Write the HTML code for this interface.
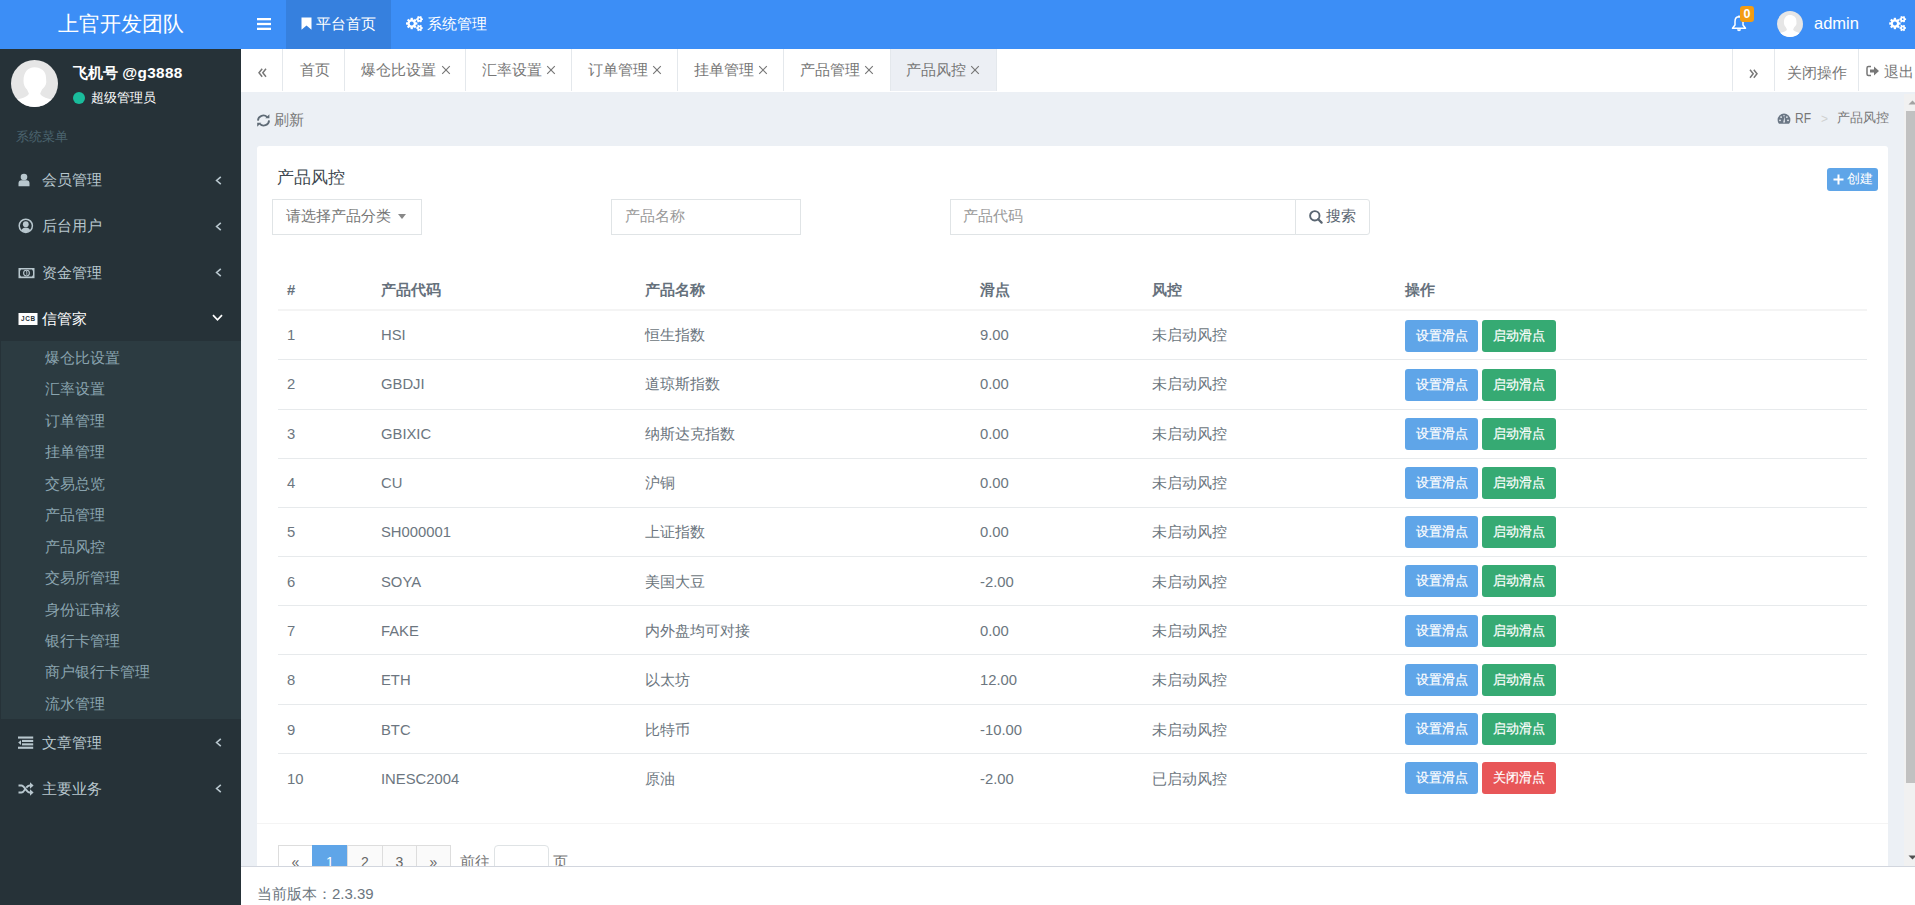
<!DOCTYPE html>
<html><head><meta charset="utf-8">
<style>
*{box-sizing:border-box;margin:0;padding:0}
html,body{width:1915px;height:905px;overflow:hidden;background:#ecf0f5;font-family:"Liberation Sans",sans-serif;font-size:14px;color:#676a6c}
.a{position:absolute;white-space:nowrap}
svg{position:absolute;display:block}
#hdr{position:absolute;left:0;top:0;width:1915px;height:49px;background:#3c8ef6}
#side{position:absolute;left:0;top:49px;width:241px;height:856px;background:#263238}
#tabs{position:absolute;left:241px;top:49px;width:1674px;height:43px;background:#fff}
#content{position:absolute;left:241px;top:92px;width:1674px;height:774px;background:#ecf0f5}
#footer{position:absolute;left:241px;top:866px;width:1674px;height:39px;background:#fff;border-top:1px solid #d2d6de}
.wt{color:#fff}
.mi{color:#b8c7ce;font-size:15px;line-height:20px}
.sm{color:#8aa4af;font-size:15px;line-height:20px}
.tab{position:absolute;top:0;height:42px;border-right:1px solid #e4e8ec}
.tt{color:#777;font-size:15px;line-height:20px;top:11px}
.th{font-weight:bold;color:#66717c;font-size:15px;line-height:20px}
.td{color:#6c7680;font-size:15px;line-height:20px}
.en{font-size:14.8px}
.btn{position:absolute;width:73px;height:31.5px;border-radius:3px;color:#fff;font-size:13px;line-height:31px;text-align:center;-webkit-text-stroke:0.2px #fff}
.b1{background:#5fa5e8}
.b2{background:#36aa73}
.b3{background:#e85658}
</style></head><body>
<div id="hdr">
<div class="a wt" style="left:58px;top:10px;font-size:21px;line-height:28px">上官开发团队</div>
<svg style="left:257px;top:18px" width="14" height="12" viewBox="0 0 14 12"><rect y="0" width="14" height="2.3" fill="#fff"/><rect y="4.85" width="14" height="2.3" fill="#fff"/><rect y="9.7" width="14" height="2.3" fill="#fff"/></svg>
<div class="a" style="left:286px;top:0;width:105px;height:49px;background:#3680de"></div>
<svg style="left:301px;top:17px" width="11" height="13" viewBox="0 0 11 13"><path d="M0.5 0.5H10.5V12.8L5.5 8.6L0.5 12.8Z" fill="#fff"/></svg>
<div class="a wt" style="left:316px;top:14px;font-size:15px;line-height:20px">平台首页</div>
<svg style="left:405px;top:15px" width="19" height="17" viewBox="0 0 19 17"><circle cx="6.7" cy="8.5" r="4.3" fill="#fff"/><rect x="5.55" y="2.80" width="2.3" height="5.7" fill="#fff" transform="rotate(0.0 6.7 8.5)"/><rect x="5.55" y="2.80" width="2.3" height="5.7" fill="#fff" transform="rotate(45.0 6.7 8.5)"/><rect x="5.55" y="2.80" width="2.3" height="5.7" fill="#fff" transform="rotate(90.0 6.7 8.5)"/><rect x="5.55" y="2.80" width="2.3" height="5.7" fill="#fff" transform="rotate(135.0 6.7 8.5)"/><rect x="5.55" y="2.80" width="2.3" height="5.7" fill="#fff" transform="rotate(180.0 6.7 8.5)"/><rect x="5.55" y="2.80" width="2.3" height="5.7" fill="#fff" transform="rotate(225.0 6.7 8.5)"/><rect x="5.55" y="2.80" width="2.3" height="5.7" fill="#fff" transform="rotate(270.0 6.7 8.5)"/><rect x="5.55" y="2.80" width="2.3" height="5.7" fill="#fff" transform="rotate(315.0 6.7 8.5)"/><circle cx="6.7" cy="8.5" r="2.0" fill="#3c8ef6"/><circle cx="14.5" cy="4.2" r="2.6" fill="#fff"/><rect x="13.75" y="0.80" width="1.5" height="3.4" fill="#fff" transform="rotate(30.0 14.5 4.2)"/><rect x="13.75" y="0.80" width="1.5" height="3.4" fill="#fff" transform="rotate(90.0 14.5 4.2)"/><rect x="13.75" y="0.80" width="1.5" height="3.4" fill="#fff" transform="rotate(150.0 14.5 4.2)"/><rect x="13.75" y="0.80" width="1.5" height="3.4" fill="#fff" transform="rotate(210.0 14.5 4.2)"/><rect x="13.75" y="0.80" width="1.5" height="3.4" fill="#fff" transform="rotate(270.0 14.5 4.2)"/><rect x="13.75" y="0.80" width="1.5" height="3.4" fill="#fff" transform="rotate(330.0 14.5 4.2)"/><circle cx="14.5" cy="4.2" r="0.85" fill="#3c8ef6"/><circle cx="14.5" cy="13.0" r="2.5" fill="#fff"/><rect x="13.75" y="9.70" width="1.5" height="3.3" fill="#fff" transform="rotate(30.0 14.5 13.0)"/><rect x="13.75" y="9.70" width="1.5" height="3.3" fill="#fff" transform="rotate(90.0 14.5 13.0)"/><rect x="13.75" y="9.70" width="1.5" height="3.3" fill="#fff" transform="rotate(150.0 14.5 13.0)"/><rect x="13.75" y="9.70" width="1.5" height="3.3" fill="#fff" transform="rotate(210.0 14.5 13.0)"/><rect x="13.75" y="9.70" width="1.5" height="3.3" fill="#fff" transform="rotate(270.0 14.5 13.0)"/><rect x="13.75" y="9.70" width="1.5" height="3.3" fill="#fff" transform="rotate(330.0 14.5 13.0)"/><circle cx="14.5" cy="13.0" r="0.85" fill="#3c8ef6"/></svg>
<div class="a wt" style="left:427px;top:14px;font-size:15px;line-height:20px">系统管理</div>
<svg style="left:1731px;top:15px" width="16" height="17" viewBox="0 0 16 17"><path d="M8 1.8C5.6 1.8 4 3.8 4 6.5V10L1.5 13.3H14.5L12 10V6.5C12 3.8 10.4 1.8 8 1.8Z" fill="none" stroke="#fff" stroke-width="1.5" stroke-linejoin="round"/><path d="M6 14.2A2 2 0 0 0 10 14.2Z" fill="#fff"/><rect x="7.2" y="0.5" width="1.6" height="2" fill="#fff"/></svg>
<div class="a" style="left:1740px;top:6px;width:14px;height:16px;background:#f39c12;border-radius:3px;color:#fff;font-size:12.5px;font-weight:bold;line-height:16px;text-align:center">0</div>
<svg style="left:1777px;top:11px" width="26" height="26" viewBox="0 0 47 47"><defs><clipPath id="av2"><circle cx="23.5" cy="23.5" r="23.5"/></clipPath></defs><circle cx="23.5" cy="23.5" r="23.5" fill="#e6e6e6"/><path d="M12.5 21C12.5 12 17 7.3 23.5 7.3C30 7.3 35 11.5 35 17.5L35.3 22C35.3 25 33 27.5 31 29.5L29.2 33.5C30 37 37 38.5 46 41L46 48L1 48L1 41C10 38.5 17 37 17.9 33.5L16 29.5C14 27.5 12.5 25 12.5 21Z" fill="#fff" clip-path="url(#av2)"/></svg>
<div class="a wt" style="left:1814px;top:13px;font-size:16.5px;line-height:20px">admin</div>
<svg style="left:1888px;top:15px" width="19" height="17" viewBox="0 0 19 17"><circle cx="6.9" cy="8.5" r="4.3" fill="#fff"/><rect x="5.75" y="2.80" width="2.3" height="5.7" fill="#fff" transform="rotate(0.0 6.9 8.5)"/><rect x="5.75" y="2.80" width="2.3" height="5.7" fill="#fff" transform="rotate(45.0 6.9 8.5)"/><rect x="5.75" y="2.80" width="2.3" height="5.7" fill="#fff" transform="rotate(90.0 6.9 8.5)"/><rect x="5.75" y="2.80" width="2.3" height="5.7" fill="#fff" transform="rotate(135.0 6.9 8.5)"/><rect x="5.75" y="2.80" width="2.3" height="5.7" fill="#fff" transform="rotate(180.0 6.9 8.5)"/><rect x="5.75" y="2.80" width="2.3" height="5.7" fill="#fff" transform="rotate(225.0 6.9 8.5)"/><rect x="5.75" y="2.80" width="2.3" height="5.7" fill="#fff" transform="rotate(270.0 6.9 8.5)"/><rect x="5.75" y="2.80" width="2.3" height="5.7" fill="#fff" transform="rotate(315.0 6.9 8.5)"/><circle cx="6.9" cy="8.5" r="2.0" fill="#3c8ef6"/><circle cx="14.7" cy="4.2" r="2.6" fill="#fff"/><rect x="13.95" y="0.80" width="1.5" height="3.4" fill="#fff" transform="rotate(30.0 14.7 4.2)"/><rect x="13.95" y="0.80" width="1.5" height="3.4" fill="#fff" transform="rotate(90.0 14.7 4.2)"/><rect x="13.95" y="0.80" width="1.5" height="3.4" fill="#fff" transform="rotate(150.0 14.7 4.2)"/><rect x="13.95" y="0.80" width="1.5" height="3.4" fill="#fff" transform="rotate(210.0 14.7 4.2)"/><rect x="13.95" y="0.80" width="1.5" height="3.4" fill="#fff" transform="rotate(270.0 14.7 4.2)"/><rect x="13.95" y="0.80" width="1.5" height="3.4" fill="#fff" transform="rotate(330.0 14.7 4.2)"/><circle cx="14.7" cy="4.2" r="0.85" fill="#3c8ef6"/><circle cx="14.7" cy="13.0" r="2.5" fill="#fff"/><rect x="13.95" y="9.70" width="1.5" height="3.3" fill="#fff" transform="rotate(30.0 14.7 13.0)"/><rect x="13.95" y="9.70" width="1.5" height="3.3" fill="#fff" transform="rotate(90.0 14.7 13.0)"/><rect x="13.95" y="9.70" width="1.5" height="3.3" fill="#fff" transform="rotate(150.0 14.7 13.0)"/><rect x="13.95" y="9.70" width="1.5" height="3.3" fill="#fff" transform="rotate(210.0 14.7 13.0)"/><rect x="13.95" y="9.70" width="1.5" height="3.3" fill="#fff" transform="rotate(270.0 14.7 13.0)"/><rect x="13.95" y="9.70" width="1.5" height="3.3" fill="#fff" transform="rotate(330.0 14.7 13.0)"/><circle cx="14.7" cy="13.0" r="0.85" fill="#3c8ef6"/></svg>
</div>
<div id="side"></div>
<svg style="left:11px;top:60px" width="47" height="47" viewBox="0 0 47 47"><defs><clipPath id="av1"><circle cx="23.5" cy="23.5" r="23.5"/></clipPath></defs><circle cx="23.5" cy="23.5" r="23.5" fill="#e6e6e6"/><path d="M12.5 21C12.5 12 17 7.3 23.5 7.3C30 7.3 35 11.5 35 17.5L35.3 22C35.3 25 33 27.5 31 29.5L29.2 33.5C30 37 37 38.5 46 41L46 48L1 48L1 41C10 38.5 17 37 17.9 33.5L16 29.5C14 27.5 12.5 25 12.5 21Z" fill="#fff" clip-path="url(#av1)"/></svg>
<div class="a wt" style="left:73px;top:63px;font-size:15.3px;line-height:20px;font-weight:bold">飞机号 <span style="letter-spacing:0.35px">@g3888</span></div>
<div class="a" style="left:73px;top:92px;width:12px;height:12px;border-radius:50%;background:#1abc9c"></div>
<div class="a wt" style="left:91px;top:88px;font-size:13px;line-height:20px">超级管理员</div>
<div class="a" style="left:16px;top:129px;font-size:13px;line-height:16px;color:#4b646f">系统菜单</div>
<div class="a mi" style="left:42px;top:170px">会员管理</div>
<svg style="left:215px;top:176px" width="7" height="9" viewBox="0 0 7 9"><path d="M5.8 0.8L1.6 4.5L5.8 8.2" fill="none" stroke="#b8c7ce" stroke-width="1.6"/></svg>
<div class="a mi" style="left:42px;top:216px">后台用户</div>
<svg style="left:215px;top:222px" width="7" height="9" viewBox="0 0 7 9"><path d="M5.8 0.8L1.6 4.5L5.8 8.2" fill="none" stroke="#b8c7ce" stroke-width="1.6"/></svg>
<div class="a mi" style="left:42px;top:263px">资金管理</div>
<svg style="left:215px;top:268px" width="7" height="9" viewBox="0 0 7 9"><path d="M5.8 0.8L1.6 4.5L5.8 8.2" fill="none" stroke="#b8c7ce" stroke-width="1.6"/></svg>
<div class="a mi" style="left:42px;top:733px">文章管理</div>
<svg style="left:215px;top:738px" width="7" height="9" viewBox="0 0 7 9"><path d="M5.8 0.8L1.6 4.5L5.8 8.2" fill="none" stroke="#b8c7ce" stroke-width="1.6"/></svg>
<div class="a mi" style="left:42px;top:779px">主要业务</div>
<svg style="left:215px;top:784px" width="7" height="9" viewBox="0 0 7 9"><path d="M5.8 0.8L1.6 4.5L5.8 8.2" fill="none" stroke="#b8c7ce" stroke-width="1.6"/></svg>
<svg style="left:18px;top:173px" width="12" height="14" viewBox="0 0 12 14"><circle cx="6" cy="4" r="3.3" fill="#b8c7ce"/><path d="M0.5 13.3V10.5Q0.5 7.2 3.5 7.2H8.5Q11.5 7.2 11.5 10.5V13.3Z" fill="#b8c7ce"/></svg>
<svg style="left:18px;top:218px" width="16" height="16" viewBox="0 0 16 16"><circle cx="7.8" cy="7.8" r="6.6" fill="none" stroke="#b8c7ce" stroke-width="1.5"/><circle cx="7.8" cy="6.2" r="2.9" fill="#b8c7ce"/><path d="M3.3 12.5Q4.5 9.4 7.8 9.4Q11.1 9.4 12.3 12.5Q10.5 14.3 7.8 14.3Q5.1 14.3 3.3 12.5Z" fill="#b8c7ce"/></svg>
<svg style="left:18px;top:267px" width="17" height="12" viewBox="0 0 17 12"><rect x="0.5" y="1" width="16" height="10.2" fill="#b8c7ce"/><path d="M3 2.6H14L15 4.3V7.9L14 9.6H3L2 7.9V4.3Z" fill="#263238"/><circle cx="8.5" cy="6.1" r="2.9" fill="none" stroke="#b8c7ce" stroke-width="1.1"/><path d="M8 4.7L8.8 4.3V7.8" stroke="#b8c7ce" stroke-width="0.9" fill="none"/></svg>
<svg style="left:18px;top:312px" width="20" height="14" viewBox="0 0 20 14"><rect x="0.5" y="1" width="19" height="12" fill="#fff"/><text x="10" y="9.1" font-family="Liberation Sans" font-weight="bold" font-size="6.4" text-anchor="middle" fill="#263238" textLength="14">JCB</text></svg>
<div class="a wt" style="left:42px;top:309px;font-size:15px;line-height:20px">信管家</div>
<svg style="left:212px;top:314px" width="11" height="8" viewBox="0 0 11 8"><path d="M1 1.2L5.5 5.8L10 1.2" fill="none" stroke="#fff" stroke-width="1.7"/></svg>
<svg style="left:18px;top:736px" width="16" height="13" viewBox="0 0 16 13"><rect x="0" y="0.5" width="15.2" height="2.1" fill="#b8c7ce"/><rect x="4" y="3.9" width="11.2" height="2.1" fill="#b8c7ce"/><rect x="4" y="7.3" width="11.2" height="2.1" fill="#b8c7ce"/><rect x="0" y="10.7" width="15.2" height="2.1" fill="#b8c7ce"/><path d="M0.2 6.6L3 4.3V8.9Z" fill="#b8c7ce"/></svg>
<svg style="left:18px;top:782px" width="16" height="14" viewBox="0 0 16 14"><path d="M0.5 3.5H3.5C6.5 3.5 8.5 10.5 11.5 10.5H13M0.5 10.5H3.5C5 10.5 6 9 7 7.5M8.3 5.6C9.2 4.4 10 3.5 11.5 3.5H13" fill="none" stroke="#b8c7ce" stroke-width="2"/><path d="M12 0.3L15.6 3.5L12 6.7Z M12 7.3L15.6 10.5L12 13.7Z" fill="#b8c7ce"/></svg>
<div class="a" style="left:0;top:341px;width:241px;height:378px;background:#2c3b41;border-left:1px solid #263238"></div>
<div class="a sm" style="left:45px;top:348px">爆仓比设置</div>
<div class="a sm" style="left:45px;top:379px">汇率设置</div>
<div class="a sm" style="left:45px;top:411px">订单管理</div>
<div class="a sm" style="left:45px;top:442px">挂单管理</div>
<div class="a sm" style="left:45px;top:474px">交易总览</div>
<div class="a sm" style="left:45px;top:505px">产品管理</div>
<div class="a sm" style="left:45px;top:537px">产品风控</div>
<div class="a sm" style="left:45px;top:568px">交易所管理</div>
<div class="a sm" style="left:45px;top:600px">身份证审核</div>
<div class="a sm" style="left:45px;top:631px">银行卡管理</div>
<div class="a sm" style="left:45px;top:662px">商户银行卡管理</div>
<div class="a sm" style="left:45px;top:694px">流水管理</div>
<div id="tabs">
<div class="tab" style="left:0;width:42px"><svg style="left:17px;top:19px" width="10" height="10" viewBox="0 0 10 10"><path d="M4.2 0.8L1 4.8L4.2 8.8M8 0.8L4.8 4.8L8 8.8" fill="none" stroke="#777" stroke-width="1.5"/></svg></div>
<div class="tab" style="left:42px;width:62px"><div class="a tt" style="left:17px">首页</div></div>
<div class="tab" style="left:104px;width:121px"><div class="a tt" style="left:16px">爆仓比设置</div><svg style="left:96px;top:16px" width="10" height="10" viewBox="0 0 10 10"><path d="M1.2 1.2L8.8 8.8M8.8 1.2L1.2 8.8" stroke="#777" stroke-width="1.15"/></svg></div>
<div class="tab" style="left:225px;width:106px"><div class="a tt" style="left:16px">汇率设置</div><svg style="left:80px;top:16px" width="10" height="10" viewBox="0 0 10 10"><path d="M1.2 1.2L8.8 8.8M8.8 1.2L1.2 8.8" stroke="#777" stroke-width="1.15"/></svg></div>
<div class="tab" style="left:331px;width:106px"><div class="a tt" style="left:16px">订单管理</div><svg style="left:80px;top:16px" width="10" height="10" viewBox="0 0 10 10"><path d="M1.2 1.2L8.8 8.8M8.8 1.2L1.2 8.8" stroke="#777" stroke-width="1.15"/></svg></div>
<div class="tab" style="left:437px;width:106px"><div class="a tt" style="left:16px">挂单管理</div><svg style="left:80px;top:16px" width="10" height="10" viewBox="0 0 10 10"><path d="M1.2 1.2L8.8 8.8M8.8 1.2L1.2 8.8" stroke="#777" stroke-width="1.15"/></svg></div>
<div class="tab" style="left:543px;width:107px"><div class="a tt" style="left:16px">产品管理</div><svg style="left:80px;top:16px" width="10" height="10" viewBox="0 0 10 10"><path d="M1.2 1.2L8.8 8.8M8.8 1.2L1.2 8.8" stroke="#777" stroke-width="1.15"/></svg></div>
<div class="tab" style="left:650px;width:106px;background:#eceff4"><div class="a tt" style="left:15px">产品风控</div><svg style="left:79px;top:16px" width="10" height="10" viewBox="0 0 10 10"><path d="M1.2 1.2L8.8 8.8M8.8 1.2L1.2 8.8" stroke="#777" stroke-width="1.15"/></svg></div>
<div class="tab" style="left:1491px;width:43px;border-left:1px solid #e4e8ec"><svg style="left:16px;top:20px" width="10" height="10" viewBox="0 0 10 10"><path d="M1 0.8L4.2 4.8L1 8.8M4.8 0.8L8 4.8L4.8 8.8" fill="none" stroke="#777" stroke-width="1.5"/></svg></div>
<div class="tab" style="left:1533px;width:85px"><div class="a tt" style="left:13px;top:14px">关闭操作</div></div>
<div class="tab" style="left:1618px;width:56px;border-right:0"><svg style="left:7px;top:16px" width="14" height="12" viewBox="0 0 14 12"><path d="M5 1.5H2.5Q1 1.5 1 3V9Q1 10.5 2.5 10.5H5" fill="none" stroke="#777" stroke-width="1.5"/><path d="M4 4.5H8V1.5L13 6L8 10.5V7.5H4Z" fill="#777"/></svg><div class="a tt" style="left:25px;top:13px">退出</div></div>
</div>
<div id="content"></div>
<svg style="left:256px;top:113px" width="15" height="15" viewBox="0 0 15 15"><path d="M1.9 7.6A5.4 5.4 0 0 1 11.2 4.2M13.1 7.4A5.4 5.4 0 0 1 3.8 10.8" fill="none" stroke="#5f6b76" stroke-width="1.8"/><path d="M13.4 1.2V5.3H9.3Z M1.2 13.8V9.7H5.3Z" fill="#5f6b76"/></svg>
<div class="a" style="left:274px;top:110px;font-size:15px;line-height:20px;color:#777">刷新</div>
<svg style="left:1777px;top:113px" width="14" height="12" viewBox="0 0 14 12"><defs><clipPath id="gc"><rect x="0" y="0" width="14" height="10.8"/></clipPath></defs><circle cx="7" cy="7" r="6.4" fill="#6b7785" clip-path="url(#gc)"/><g fill="#ecf0f5"><circle cx="3" cy="7.3" r="0.9"/><circle cx="4.1" cy="4.1" r="0.9"/><circle cx="9.9" cy="4.1" r="0.9"/><circle cx="11" cy="7.3" r="0.9"/><circle cx="7" cy="2.7" r="0.7"/></g><path d="M7.6 3.5L7.9 9.5L6.2 9.5Z" fill="#ecf0f5"/></svg>
<div class="a" style="left:1795px;top:108px;font-size:14px;line-height:20px;color:#777;transform:scaleX(0.86);transform-origin:0 0">RF</div>
<div class="a" style="left:1821px;top:109px;font-size:12px;line-height:20px;color:#d0d0d0">&gt;</div>
<div class="a" style="left:1837px;top:108px;font-size:13px;line-height:20px;color:#777">产品风控</div>
<div class="a" style="left:257px;top:146px;width:1631px;height:760px;background:#fff;border-radius:3px"></div>
<div class="a" style="left:277px;top:167px;font-size:17px;line-height:22px;color:#3d4750">产品风控</div>
<div class="a" style="left:1827px;top:168px;width:51px;height:23px;background:#5fa5e8;border-radius:3px"></div>
<svg style="left:1833px;top:174px" width="11" height="11" viewBox="0 0 11 11"><path d="M5.5 0.5V10.5M0.5 5.5H10.5" stroke="#fff" stroke-width="2"/></svg>
<div class="a wt" style="left:1847px;top:169px;font-size:13px;line-height:20px">创建</div>
<div class="a" style="left:272px;top:199px;width:150px;height:36px;border:1px solid #e0e4e6;background:#fff"></div>
<div class="a" style="left:286px;top:206px;font-size:15px;line-height:20px;color:#777">请选择产品分类</div>
<svg style="left:398px;top:214px" width="8" height="5" viewBox="0 0 8 5"><path d="M0 0H8L4 5Z" fill="#888"/></svg>
<div class="a" style="left:611px;top:199px;width:190px;height:36px;border:1px solid #e0e4e6;background:#fff"></div>
<div class="a" style="left:625px;top:206px;font-size:15px;line-height:20px;color:#999">产品名称</div>
<div class="a" style="left:950px;top:199px;width:346px;height:36px;border:1px solid #e0e4e6;background:#fff"></div>
<div class="a" style="left:963px;top:206px;font-size:15px;line-height:20px;color:#999">产品代码</div>
<div class="a" style="left:1295px;top:199px;width:75px;height:36px;border:1px solid #e0e4e6;border-radius:0 3px 3px 0;background:#fff"></div>
<svg style="left:1309px;top:210px" width="14" height="14" viewBox="0 0 14 14"><circle cx="5.8" cy="5.8" r="4.7" fill="none" stroke="#5a6672" stroke-width="1.9"/><path d="M9.2 9.2L12.6 12.6" stroke="#5a6672" stroke-width="2.2" stroke-linecap="round"/></svg>
<div class="a" style="left:1326px;top:206px;font-size:15px;line-height:20px;color:#5a6672">搜索</div>
<div class="a th en" style="left:287px;top:280px">#</div>
<div class="a th" style="left:381px;top:280px">产品代码</div>
<div class="a th" style="left:645px;top:280px">产品名称</div>
<div class="a th" style="left:980px;top:280px">滑点</div>
<div class="a th" style="left:1152px;top:280px">风控</div>
<div class="a th" style="left:1405px;top:280px">操作</div>
<div class="a" style="left:278px;top:309px;width:1589px;height:2px;background:#f4f4f4"></div>
<div class="a td en" style="left:287px;top:325px">1</div>
<div class="a td en" style="left:381px;top:325px">HSI</div>
<div class="a td" style="left:645px;top:325px">恒生指数</div>
<div class="a td en" style="left:980px;top:325px">9.00</div>
<div class="a td" style="left:1152px;top:325px">未启动风控</div>
<div class="btn b1" style="left:1405px;top:320px">设置滑点</div>
<div class="btn b2" style="left:1482px;top:320px;width:74px">启动滑点</div>
<div class="a" style="left:278px;top:359px;width:1589px;height:1px;background:#e7eaec"></div>
<div class="a td en" style="left:287px;top:374px">2</div>
<div class="a td en" style="left:381px;top:374px">GBDJI</div>
<div class="a td" style="left:645px;top:374px">道琼斯指数</div>
<div class="a td en" style="left:980px;top:374px">0.00</div>
<div class="a td" style="left:1152px;top:374px">未启动风控</div>
<div class="btn b1" style="left:1405px;top:369px">设置滑点</div>
<div class="btn b2" style="left:1482px;top:369px;width:74px">启动滑点</div>
<div class="a" style="left:278px;top:409px;width:1589px;height:1px;background:#e7eaec"></div>
<div class="a td en" style="left:287px;top:424px">3</div>
<div class="a td en" style="left:381px;top:424px">GBIXIC</div>
<div class="a td" style="left:645px;top:424px">纳斯达克指数</div>
<div class="a td en" style="left:980px;top:424px">0.00</div>
<div class="a td" style="left:1152px;top:424px">未启动风控</div>
<div class="btn b1" style="left:1405px;top:418px">设置滑点</div>
<div class="btn b2" style="left:1482px;top:418px;width:74px">启动滑点</div>
<div class="a" style="left:278px;top:458px;width:1589px;height:1px;background:#e7eaec"></div>
<div class="a td en" style="left:287px;top:473px">4</div>
<div class="a td en" style="left:381px;top:473px">CU</div>
<div class="a td" style="left:645px;top:473px">沪铜</div>
<div class="a td en" style="left:980px;top:473px">0.00</div>
<div class="a td" style="left:1152px;top:473px">未启动风控</div>
<div class="btn b1" style="left:1405px;top:467px">设置滑点</div>
<div class="btn b2" style="left:1482px;top:467px;width:74px">启动滑点</div>
<div class="a" style="left:278px;top:507px;width:1589px;height:1px;background:#e7eaec"></div>
<div class="a td en" style="left:287px;top:522px">5</div>
<div class="a td en" style="left:381px;top:522px">SH000001</div>
<div class="a td" style="left:645px;top:522px">上证指数</div>
<div class="a td en" style="left:980px;top:522px">0.00</div>
<div class="a td" style="left:1152px;top:522px">未启动风控</div>
<div class="btn b1" style="left:1405px;top:516px">设置滑点</div>
<div class="btn b2" style="left:1482px;top:516px;width:74px">启动滑点</div>
<div class="a" style="left:278px;top:556px;width:1589px;height:1px;background:#e7eaec"></div>
<div class="a td en" style="left:287px;top:572px">6</div>
<div class="a td en" style="left:381px;top:572px">SOYA</div>
<div class="a td" style="left:645px;top:572px">美国大豆</div>
<div class="a td en" style="left:980px;top:572px">-2.00</div>
<div class="a td" style="left:1152px;top:572px">未启动风控</div>
<div class="btn b1" style="left:1405px;top:565px">设置滑点</div>
<div class="btn b2" style="left:1482px;top:565px;width:74px">启动滑点</div>
<div class="a" style="left:278px;top:605px;width:1589px;height:1px;background:#e7eaec"></div>
<div class="a td en" style="left:287px;top:621px">7</div>
<div class="a td en" style="left:381px;top:621px">FAKE</div>
<div class="a td" style="left:645px;top:621px">内外盘均可对接</div>
<div class="a td en" style="left:980px;top:621px">0.00</div>
<div class="a td" style="left:1152px;top:621px">未启动风控</div>
<div class="btn b1" style="left:1405px;top:615px">设置滑点</div>
<div class="btn b2" style="left:1482px;top:615px;width:74px">启动滑点</div>
<div class="a" style="left:278px;top:654px;width:1589px;height:1px;background:#e7eaec"></div>
<div class="a td en" style="left:287px;top:670px">8</div>
<div class="a td en" style="left:381px;top:670px">ETH</div>
<div class="a td" style="left:645px;top:670px">以太坊</div>
<div class="a td en" style="left:980px;top:670px">12.00</div>
<div class="a td" style="left:1152px;top:670px">未启动风控</div>
<div class="btn b1" style="left:1405px;top:664px">设置滑点</div>
<div class="btn b2" style="left:1482px;top:664px;width:74px">启动滑点</div>
<div class="a" style="left:278px;top:704px;width:1589px;height:1px;background:#e7eaec"></div>
<div class="a td en" style="left:287px;top:720px">9</div>
<div class="a td en" style="left:381px;top:720px">BTC</div>
<div class="a td" style="left:645px;top:720px">比特币</div>
<div class="a td en" style="left:980px;top:720px">-10.00</div>
<div class="a td" style="left:1152px;top:720px">未启动风控</div>
<div class="btn b1" style="left:1405px;top:713px">设置滑点</div>
<div class="btn b2" style="left:1482px;top:713px;width:74px">启动滑点</div>
<div class="a" style="left:278px;top:753px;width:1589px;height:1px;background:#e7eaec"></div>
<div class="a td en" style="left:287px;top:769px">10</div>
<div class="a td en" style="left:381px;top:769px">INESC2004</div>
<div class="a td" style="left:645px;top:769px">原油</div>
<div class="a td en" style="left:980px;top:769px">-2.00</div>
<div class="a td" style="left:1152px;top:769px">已启动风控</div>
<div class="btn b1" style="left:1405px;top:762px">设置滑点</div>
<div class="btn b3" style="left:1482px;top:762px;width:74px">关闭滑点</div>
<div class="a" style="left:257px;top:823px;width:1631px;height:1px;background:#f4f4f4"></div>
<div class="a" style="left:278px;top:845px;width:35px;height:34px;background:#fff;border:1px solid #ddd;color:#666;font-size:14px;line-height:32px;text-align:center">«</div>
<div class="a" style="left:312px;top:845px;width:36px;height:34px;background:#5fa5e8;border:1px solid #5fa5e8;color:#fff;font-size:14px;line-height:32px;text-align:center">1</div>
<div class="a" style="left:347px;top:845px;width:36px;height:34px;background:#fafafa;border:1px solid #ddd;color:#666;font-size:14px;line-height:32px;text-align:center">2</div>
<div class="a" style="left:382px;top:845px;width:35px;height:34px;background:#fafafa;border:1px solid #ddd;color:#666;font-size:14px;line-height:32px;text-align:center">3</div>
<div class="a" style="left:416px;top:845px;width:35px;height:34px;background:#fafafa;border:1px solid #ddd;color:#666;font-size:14px;line-height:32px;text-align:center">»</div>
<div class="a" style="left:460px;top:852px;font-size:15px;line-height:20px;color:#777">前往</div>
<div class="a" style="left:494px;top:845px;width:55px;height:34px;border:1px solid #dfe3e5;border-radius:4px;background:#fff"></div>
<div class="a" style="left:553px;top:852px;font-size:15px;line-height:20px;color:#777">页</div>
<div class="a" style="left:1904px;top:94px;width:11px;height:772px;background:#f1f1f1"></div>
<div class="a" style="left:1906px;top:111px;width:9px;height:672px;background:#c1c1c1"></div>
<svg style="left:1908px;top:100px" width="7" height="5" viewBox="0 0 7 5"><path d="M0.5 4.5L4.5 0.5L8.5 4.5Z" fill="#a3a3a3"/></svg>
<svg style="left:1908px;top:855px" width="7" height="5" viewBox="0 0 7 5"><path d="M0.5 0.5L4.5 4.5L8.5 0.5Z" fill="#505050"/></svg>
<div id="footer"><div class="a" style="left:16px;top:17px;font-size:15px;line-height:20px;color:#6c7680">当前版本：2.3.39</div></div>
</body></html>
